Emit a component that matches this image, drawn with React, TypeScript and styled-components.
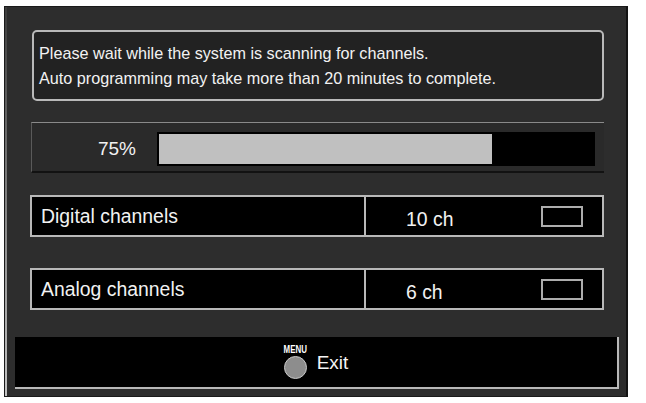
import React from "react";
import styled, { createGlobalStyle } from "styled-components";

const Global = createGlobalStyle`
  html, body { margin: 0; padding: 0; background: #ffffff; }
  body { font-family: "Liberation Sans", Arial, sans-serif; }
`;

const Frame = styled.div`
  box-sizing: border-box;
  margin: 6px 0 0 4px;
  width: 624px;
  height: 391px;
  border: 1px solid #1a1a1a;
  border-right: 2px solid #141414;
  background: linear-gradient(#3c3c3c, #c4c4c4) 0 0 / 2px 100% no-repeat, #2d2d2d;
  display: flex;
  flex-direction: column;
`;

const Message = styled.div`
  box-sizing: border-box;
  margin: 23px 0 0 27px;
  width: 572px;
  height: 71px;
  border: 2px solid #b9b9b9;
  border-radius: 5px;
  background: #222222;
  padding: 9px 0 0 5px;
  color: #f2f2f2;
  font-size: 16.2px;
  line-height: 25px;
`;

const ProgressRow = styled.div`
  box-sizing: border-box;
  margin: 21px 0 0 26px;
  width: 573px;
  height: 51px;
  border-top: 1px solid #8a8a8a;
  border-left: 1px solid #5a5a5a;
  border-bottom: 2px solid #121212;
  background: #2a2a2a;
  display: flex;
  align-items: center;
  padding-top: 3px;
`;

const Percent = styled.div`
  width: 104px;
  text-align: right;
  color: #f2f2f2;
  font-size: 19px;
  line-height: 22px;
`;

const Track = styled.div`
  box-sizing: border-box;
  margin-left: 21px;
  width: 438px;
  height: 34px;
  padding: 2px;
  background: #000;
`;

const Fill = styled.div<{ $pct: number }>`
  height: 100%;
  width: ${(p) => p.$pct}%;
  background: #c0c0c0;
`;

const ChannelRow = styled.div<{ $top: number }>`
  box-sizing: border-box;
  margin: ${(p) => p.$top}px 0 0 25px;
  width: 574px;
  height: 42px;
  border: 2px solid #b8b8b8;
  background: #000;
  display: flex;
  color: #f2f2f2;
  font-size: 19.4px;
  line-height: 38px;
`;

const Label = styled.div`
  box-sizing: border-box;
  width: 334px;
  padding-left: 9px;
  border-right: 2px solid #b8b8b8;
`;

const ValueCell = styled.div`
  flex: 1;
  display: flex;
  align-items: center;
  padding-left: 40px;
`;

const Value = styled.span`
  margin-top: 6px;
`;

const Indicator = styled.div`
  box-sizing: border-box;
  margin: 0 19px 0 auto;
  width: 42px;
  height: 21px;
  border: 2px solid #adadad;
  background: #000;
`;

const Footer = styled.div`
  box-sizing: border-box;
  margin: 27px 0 0 10px;
  width: 604px;
  height: 52px;
  background: #000;
  border-right: 2px solid #b9b9b9;
  border-bottom: 2px solid #b9b9b9;
  display: flex;
  justify-content: center;
  align-items: flex-start;
  padding: 7px 0 0 0;
`;

const Key = styled.div`
  display: flex;
  flex-direction: column;
  align-items: center;
  width: 24px;
`;

const KeyLabel = styled.span`
  color: #ffffff;
  font-size: 11px;
  font-weight: bold;
  line-height: 11px;
  transform: scaleX(0.72);
  white-space: nowrap;
`;

const KeyButton = styled.div`
  box-sizing: border-box;
  margin-top: 1px;
  width: 23px;
  height: 23px;
  border-radius: 50%;
  background: #8d8d8d;
  border: 1px solid #c8c8c8;
`;

const Exit = styled.span`
  margin: 8px 0 0 9px;
  color: #f4f4f4;
  font-size: 19px;
  line-height: 22px;
`;

const channels = [
  { label: "Digital channels", value: "10 ch", top: 22 },
  { label: "Analog channels", value: "6 ch", top: 31 },
];

export default function App() {
  return (
    <>
      <Global />
      <Frame>
        <Message>
          Please wait while the system is scanning for channels.
          <br />
          Auto programming may take more than 20 minutes to complete.
        </Message>
        <ProgressRow>
          <Percent>75%</Percent>
          <Track>
            <Fill $pct={76.7} />
          </Track>
        </ProgressRow>
        {channels.map((c) => (
          <ChannelRow key={c.label} $top={c.top}>
            <Label>{c.label}</Label>
            <ValueCell>
              <Value>{c.value}</Value>
              <Indicator />
            </ValueCell>
          </ChannelRow>
        ))}
        <Footer>
          <Key>
            <KeyLabel>MENU</KeyLabel>
            <KeyButton />
          </Key>
          <Exit>Exit</Exit>
        </Footer>
      </Frame>
    </>
  );
}
